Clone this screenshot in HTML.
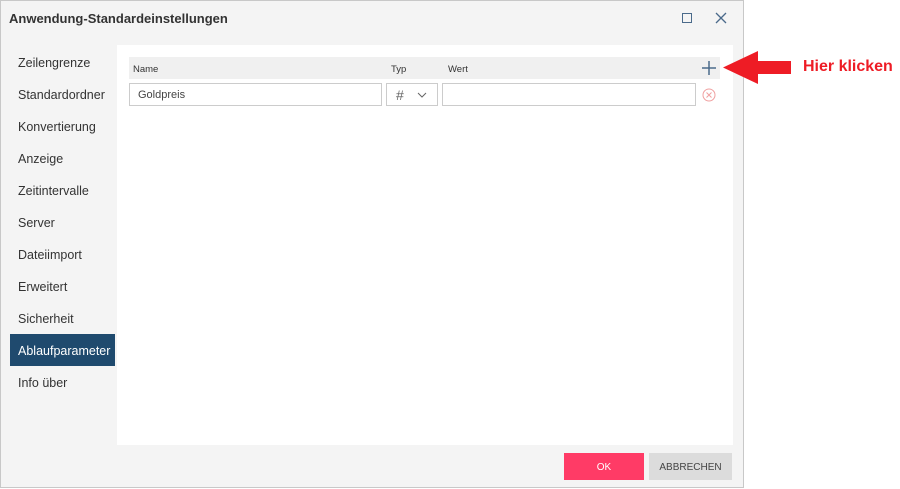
<!DOCTYPE html><html><head><style>
body{margin:0;width:900px;height:489px;background:#fff;font-family:"Liberation Sans",sans-serif;position:relative;overflow:hidden}
.dlg{position:absolute;left:0;top:0;width:744px;height:488px;background:#f4f4f4}
.bd{position:absolute;left:0;top:0;width:742px;height:486px;border:1px solid #c8c8c8}
.t{position:absolute;left:9px;top:11px;font-size:13px;font-weight:bold;color:#333}
.nav{position:absolute;left:18px;font-size:12.5px;color:#333}
.sel{position:absolute;left:10px;top:334px;width:105px;height:32px;background:#1f4a6e}
.panel{position:absolute;left:117px;top:45px;width:616px;height:400px;background:#fff}
.hdr{position:absolute;left:129px;top:57px;width:591px;height:22px;background:#f0f0f0}
.h{position:absolute;top:64px;font-size:9.5px;color:#333}
.in{position:absolute;top:83px;height:23px;border:1px solid #ccc;background:#fff;font-size:11px;color:#444;box-sizing:border-box}
.btn{position:absolute;top:453px;height:27px;font-size:10px;text-align:center;line-height:29px}
</style></head><body>
<div class="dlg">
<div class="t">Anwendung-Standardeinstellungen</div>
<div style="position:absolute;left:682px;top:13px;width:8px;height:8px;border:1.5px solid #4a6a8a"></div>
<svg style="position:absolute;left:715px;top:12px" width="12" height="12"><path d="M1 1L11 11M11 1L1 11" stroke="#4a6a8a" stroke-width="1.3"/></svg>
<div class="sel"></div>
<div class="nav" style="top:56px">Zeilengrenze</div>
<div class="nav" style="top:88px">Standardordner</div>
<div class="nav" style="top:120px">Konvertierung</div>
<div class="nav" style="top:152px">Anzeige</div>
<div class="nav" style="top:184px">Zeitintervalle</div>
<div class="nav" style="top:216px">Server</div>
<div class="nav" style="top:248px">Dateiimport</div>
<div class="nav" style="top:280px">Erweitert</div>
<div class="nav" style="top:312px">Sicherheit</div>
<div class="nav" style="top:344px;color:#fff">Ablaufparameter</div>
<div class="nav" style="top:376px">Info über</div>
<div class="panel"></div>
<div class="hdr"></div>
<div class="h" style="left:133px">Name</div>
<div class="h" style="left:391px">Typ</div>
<div class="h" style="left:448px">Wert</div>
<svg style="position:absolute;left:702px;top:61px" width="14" height="14"><path d="M7 0V14M0 7H14" stroke="#4a6a8a" stroke-width="1.5"/></svg>
<div class="in" style="left:129px;width:253px;padding:5px 8px">Goldpreis</div>
<div class="in" style="left:386px;width:52px;padding:3px 9px;font-size:14px;color:#666">#<svg style="position:absolute;left:30px;top:8px" width="10" height="6"><path d="M1 1L5 5L9 1" stroke="#666" fill="none"/></svg></div>
<div class="in" style="left:442px;width:254px"></div>
<svg style="position:absolute;left:702px;top:88px" width="14" height="14"><circle cx="7" cy="7" r="6" stroke="#f0a0a0" fill="none"/><path d="M4.5 4.5L9.5 9.5M9.5 4.5L4.5 9.5" stroke="#f0a0a0"/></svg>
<div class="btn" style="left:564px;width:80px;background:#ff3b66;color:#fff">OK</div>
<div class="btn" style="left:649px;width:83px;background:#dcdcdc;color:#444">ABBRECHEN</div>
<div class="bd"></div>
</div>
<svg style="position:absolute;left:722px;top:50px" width="70" height="35"><path d="M1 17.5L36 1V11H69V24H36V34Z" fill="#ee1c25"/></svg>
<div style="position:absolute;left:803px;top:58px;font-size:16px;font-weight:bold;color:#ee1c25">Hier klicken</div>
</body></html>
